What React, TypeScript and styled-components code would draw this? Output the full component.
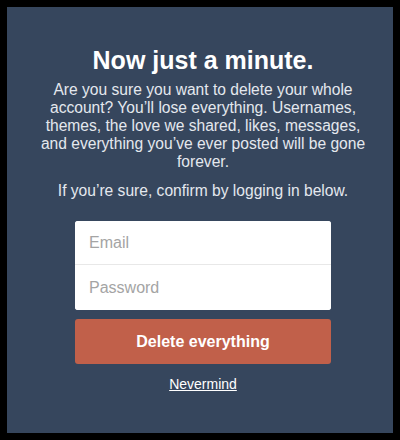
import React from 'react';
import styled, {createGlobalStyle} from 'styled-components';

const GlobalStyle = createGlobalStyle`
    html, body {
        margin: 0;
        padding: 0;
        background: #000000;
    }
    body {
        font-family: "Liberation Sans", Arial, sans-serif;
    }
`;

const Frame = styled.div`
    width: 400px;
    height: 440px;
    padding: 7px;
    box-sizing: border-box;
`;

const Panel = styled.div`
    height: 426px;
    background: #36465d;
    display: flex;
    justify-content: center;
    padding: 39px 0 0 6px;
    box-sizing: border-box;
`;

const Column = styled.div`
    width: 340px;
    display: flex;
    flex-direction: column;
    align-items: center;
    text-align: center;
`;

const Title = styled.h1`
    margin: 0;
    font-size: 25px;
    line-height: 28px;
    font-weight: bold;
    color: #ffffff;
`;

const Text = styled.p<{ $gap: number }>`
    margin: ${p => p.$gap}px 0 0;
    font-size: 15.6px;
    line-height: 18px;
    color: #e4e8ee;
`;

const Fields = styled.div`
    width: 256px;
    margin-top: 21px;
    background: #ffffff;
    border-radius: 3px;
    display: flex;
    flex-direction: column;
    overflow: hidden;
`;

const Field = styled.input`
    height: 43px;
    border: none;
    padding: 0 14px;
    font-family: inherit;
    font-size: 16px;
    color: #444444;
    background: #ffffff;
    outline: none;

    &::placeholder {
        color: #a4a4a4;
    }

    & + & {
        border-top: 1px solid #e8e8e8;
        height: 45px;
    }
`;

const DeleteButton = styled.button`
    width: 256px;
    height: 45px;
    margin-top: 9px;
    border: none;
    border-radius: 3px;
    background: #c1604a;
    color: #ffffff;
    font-family: inherit;
    font-size: 16px;
    font-weight: bold;
    cursor: pointer;
`;

const Nevermind = styled.a`
    margin-top: 11px;
    font-size: 14px;
    line-height: 18px;
    color: #ffffff;
    text-decoration: underline;
    cursor: pointer;
`;

const App = () => {
    return (
        <Frame>
            <GlobalStyle/>
            <Panel>
                <Column>
                    <Title>Now just a minute.</Title>
                    <Text $gap={7}>
                        Are you sure you want to delete your whole account? You’ll lose everything. Usernames,
                        themes, the love we shared, likes, messages, and everything you’ve ever posted will be
                        gone forever.
                    </Text>
                    <Text $gap={11}>If you’re sure, confirm by logging in below.</Text>
                    <Fields>
                        <Field type="email" placeholder="Email"/>
                        <Field type="password" placeholder="Password"/>
                    </Fields>
                    <DeleteButton>Delete everything</DeleteButton>
                    <Nevermind>Nevermind</Nevermind>
                </Column>
            </Panel>
        </Frame>
    );
};

export default App;
